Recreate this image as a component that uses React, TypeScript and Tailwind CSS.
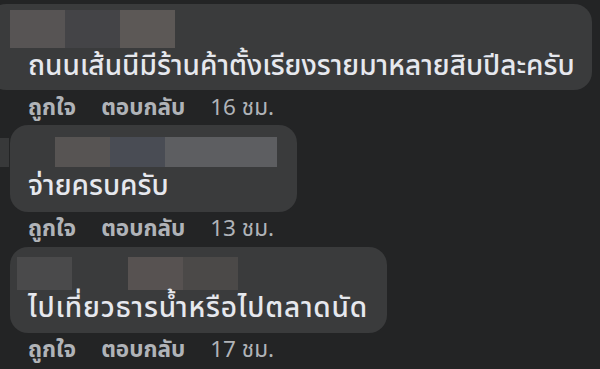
import React from 'react';

type Block = { w: number; color: string };

type Comment = {
  top: string;
  bubble: string;
  names: string;
  nameH: string;
  blocks: Block[];
  text: string;
  textBox: string;
  time: string;
  actions: string;
};

const comments: Comment[] = [
  {
    top: 'mt-[4px]',
    bubble: 'ml-[-12px] w-[604px] h-[86px] pl-[40px] pt-[6px]',
    names: 'ml-[-18px]',
    nameH: 'h-[38px]',
    blocks: [
      { w: 55, color: '#575454' },
      { w: 55, color: '#444447' },
      { w: 55, color: '#5c5856' },
    ],
    text: 'ถนนเส้นนีมีร้านค้าตั้งเรียงรายมาหลายสิบปีละครับ',
    textBox: 'h-[38px]',
    time: '16 ชม.',
    actions: 'h-[34px] pt-[2px]',
  },
  {
    top: 'mt-[1px]',
    bubble: 'ml-[10px] w-[287px] h-[87px] pl-[18px] pt-[12px]',
    names: 'ml-[27px]',
    nameH: 'h-[30px]',
    blocks: [
      { w: 55, color: '#575453' },
      { w: 55, color: '#494c54' },
      { w: 112, color: '#5d5e61' },
    ],
    text: 'จ่ายครบครับ',
    textBox: 'h-[40px]',
    time: '13 ชม.',
    actions: 'h-[34px]',
  },
  {
    top: 'mt-[1px]',
    bubble: 'ml-[10px] w-[377px] h-[86px] pl-[18px] pt-[10px]',
    names: 'ml-[-11px]',
    nameH: 'h-[33px]',
    blocks: [
      { w: 55, color: '#4a4a4b' },
      { w: 56, color: '#00000000' },
      { w: 55, color: '#575251' },
      { w: 55, color: '#4b4948' },
    ],
    text: 'ไปเที่ยวธารน้ำหรือไปตลาดนัด',
    textBox: 'h-[38px] tracking-[0.8px]',
    time: '17 ชม.',
    actions: 'h-[34px]',
  },
];

const font = { fontFamily: '"Noto Sans Thai", Tahoma, "Leelawadee UI", "DejaVu Sans", sans-serif' };

export default function App() {
  return (
    <div className="relative w-[600px] h-[369px] overflow-hidden bg-[#232425]" style={font}>
      {/* stray redaction block left of the second bubble */}
      <div className="absolute left-0 top-[138px] w-[9px] h-[29px] bg-[#38393a]" />

      {comments.map((c, i) => (
        <div key={i} className={c.top}>
          <div className={`rounded-[18px] bg-[#3a3b3c] ${c.bubble}`}>
            <div className={`flex ${c.names} ${c.nameH}`}>
              {c.blocks.map((b, j) => (
                <div key={j} className="h-full" style={{ width: b.w, backgroundColor: b.color }} />
              ))}
            </div>
            <div className={`flex items-center whitespace-nowrap text-[28px] leading-none font-medium text-[#e6e8ee] ${c.textBox}`}>
              {c.text}
            </div>
          </div>
          <div className={`flex items-center gap-[25px] pl-[28px] text-[22.5px] leading-none font-bold text-[#b0b3b8] ${c.actions}`}>
            <span>ถูกใจ</span>
            <span>ตอบกลับ</span>
            <span className="font-normal">{c.time}</span>
          </div>
        </div>
      ))}
    </div>
  );
}
